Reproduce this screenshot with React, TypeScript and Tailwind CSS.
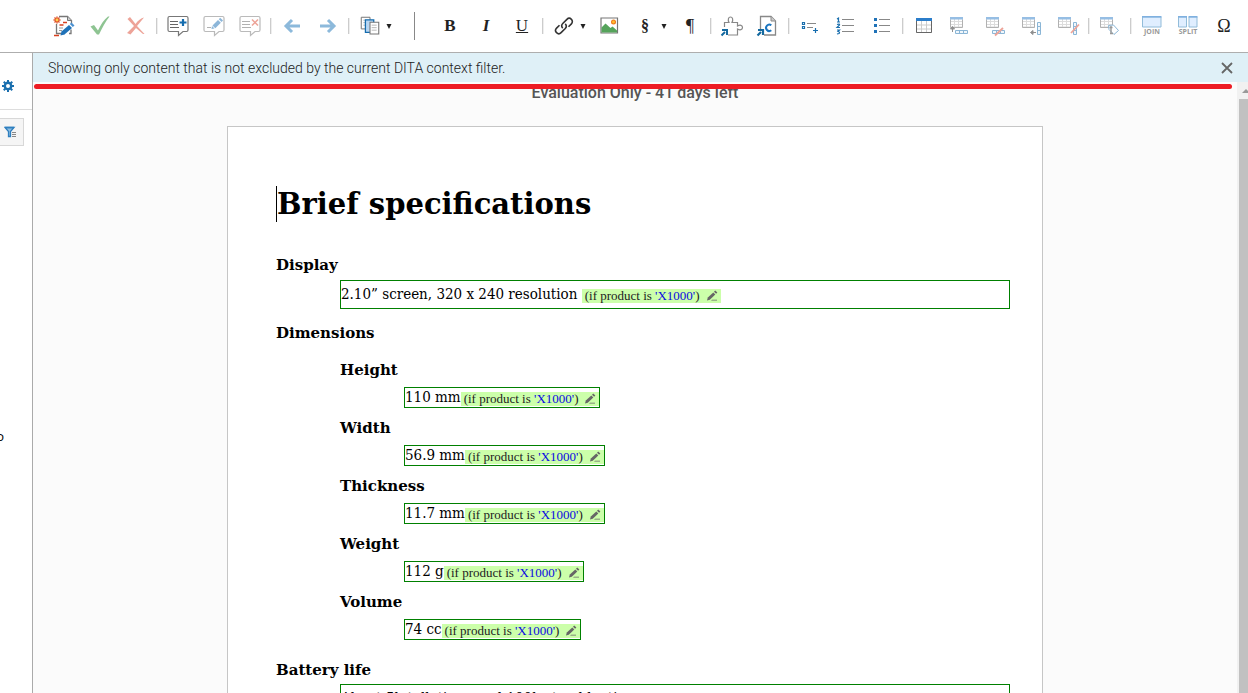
import type { ReactNode } from 'react';

function Svg({ children, faded = false, size = 'size-6' }: { children: ReactNode; faded?: boolean; size?: string }) {
  return (
    <svg viewBox="0 0 24 24" fill="none" aria-hidden="true" className={`${size} shrink-0 ${faded ? 'opacity-50' : ''}`}>
      {children}
    </svg>
  );
}

function Tool({ label, children }: { label: string; children: ReactNode }) {
  return (
    <button type="button" aria-label={label} className="flex h-9 w-9 shrink-0 items-center justify-center text-[#222]">
      {children}
    </button>
  );
}

function MenuTool({ label, children }: { label: string; children: ReactNode }) {
  return (
    <button type="button" aria-label={label} className="flex h-9 w-[45px] shrink-0 items-center gap-[6px] pl-2 text-[#222]">
      <span className="flex w-5 items-center justify-center">{children}</span>
      <svg viewBox="0 0 6 6" aria-hidden="true" className="mt-0.5 size-[6px]">
        <path d="M.5 0h5L3 5z" fill="#222" />
      </svg>
    </button>
  );
}

const Sep = () => <span className="mx-0.5 h-4 w-0.5 shrink-0 border-r border-[#eee] bg-[#ccc]" />;

const Bubble = () => <path d="M3.5 2.5h17a1.5 1.5 0 0 1 1.500 1.500v12a1.500 1.500 0 0 1-1.500 1.500h-3.500l-4.500 4v-4h-9a1.500 1.500 0 0 1-1.500-1.500v-12a1.500 1.500 0 0 1 1.500-1.500z" stroke="#777" strokeWidth="1.2" fill="#fff" />;

const Pen = () => (
  <>
    <path d="M9.500 15l.5-3 2.500 2.500z" fill="#1b6fb5" />
    <path d="M10.500 11.500l5.500-5.500 2.800 2.800-5.500 5.500z" fill="#1b6fb5" />
    <path d="M16.800 5.200l1.400-1.400 2.800 2.800L19.600 8z" fill="#1b6fb5" />
  </>
);

function MiniTable() {
  return (
    <>
      <path d="M2.500 4.500h12v8.500h-12zM2.500 7.500h12M2.500 10.500h12M6.500 5v8M10.500 5v8" stroke="#bbb" strokeWidth="1" fill="#fff" />
      <path d="M2.500 5.500v8h12v-8" stroke="#666" />
      <path d="M2 3h13v2.500H2z" fill="#2f7fca" />
    </>
  );
}

const RowBox = () => <path d="M7.500 16.500h12v3h-12zM11.500 16.500v3M15.500 16.500v3" stroke="#1a6fae" fill="#e3f0fa" />;
const ColBox = () => <path d="M17.500 8.500h3v12h-3zM17.500 12.500h3M17.500 16.500h3" stroke="#1a6fae" fill="#e3f0fa" />;

function JoinSplit({ split }: { split: boolean }) {
  return (
    <span className="flex flex-col items-center">
      <svg viewBox="0 0 20 12" className="h-3 w-5" aria-hidden="true" fill="#e0eeff">
        <path d={split ? 'M.5 1h8v10h-8zM11 1h8v10h-8z' : 'M.5 1h18.500v10H.5z'} stroke="#92bcd9" />
        <path d={split ? 'M0 .5h9M10.500 .5h9' : 'M0 .5h19.500'} stroke="#7fb0e0" strokeWidth="2" />
      </svg>
      <span className="font-['Open_Sans',sans-serif] text-[7px] leading-2 font-bold text-[#999]">{split ? 'SPLIT' : 'JOIN'}</span>
    </span>
  );
}

const letter = "font-['Liberation_Serif',serif]";

function Toolbar() {
  return (
    <header className="flex h-[53px] shrink-0 items-center overflow-hidden border-b border-[#aeaeae] bg-white pl-[46px]">
      <Tool label="Track changes">
        <Svg>
          <path d="M7 2.500h8.500l4 4v3M4.500 10v9.500h8M19 15.500v4h-2" stroke="#777" strokeWidth="1.300" />
          <path d="M15.500 2.500v4h4" stroke="#777" fill="#ccc" />
          <path d="M11 8.500h4M7.500 11h4M2 21.500h5" stroke="#d8401f" strokeWidth="1.300" />
          <path d="M7 14h4M7 16.500h3" stroke="#999" />
          <path d="M5 2.500v7M1.500 6h7M2.500 3.500l5 5M7.500 3.500l-5 5" stroke="#e0532a" strokeWidth="1.400" />
          <circle cx="5" cy="6" r="1.400" fill="#ffd050" />
          <path d="M8.500 21.500l1-4 7.500-6.500 3 3-7.500 6.500z" fill="#1f72b8" />
          <path d="M17.800 10l1.700-1.500 3 3-1.700 1.500z" fill="#4a90d0" />
        </Svg>
      </Tool>
      <Tool label="Accept change">
        <Svg faded>
          <path d="M2.500 12.500l3.500-1.500 4 5.500C12.500 11 16 5.500 20 2.500h1.500C17.500 7.500 14 14 11 20.500H9z" fill="#1f8a28" />
        </Svg>
      </Tool>
      <Tool label="Reject change">
        <Svg faded>
          <path d="M3.500 5L6 3l5.500 7C14 6.500 17 4 20 3.500L13 12l7.500 8h-1.500l-7-6-5.500 6.500L3 19l7-7z" fill="#dd4a33" />
        </Svg>
      </Tool>
      <Sep />
      <Tool label="Add comment">
        <Svg>
          <Bubble />
          <path d="M4 7.500h8M4 10.500h8M4 13.500h9" stroke="#666" />
          <path d="M17 5v7M13.500 8.500h7" stroke="#156cae" strokeWidth="2.200" />
        </Svg>
      </Tool>
      <Tool label="Edit comment">
        <Svg faded>
          <Bubble />
          <Pen />
          <path d="M5 13.500h4" stroke="#666" />
        </Svg>
      </Tool>
      <Tool label="Remove comment">
        <Svg faded>
          <Bubble />
          <path d="M4 7.500h8M4 10.500h8M4 13.500h9" stroke="#666" />
          <path d="M14 5.500l6 6M20 5.500l-6 6" stroke="#dd4a33" strokeWidth="1.500" />
        </Svg>
      </Tool>
      <Sep />
      <Tool label="Undo">
        <Svg faded>
          <path d="M20 12H7M12 6l-6 6 6 6" stroke="#1b75b8" strokeWidth="3" />
        </Svg>
      </Tool>
      <Tool label="Redo">
        <Svg faded>
          <path d="M4 12h13M12 6l6 6-6 6" stroke="#1b75b8" strokeWidth="3" />
        </Svg>
      </Tool>
      <Sep />
      <MenuTool label="Clipboard">
        <Svg size="size-5">
          <path d="M1.500 1.500h10.500v14h-10.500z" stroke="#777" strokeWidth="1.200" fill="#fff" />
          <path d="M4 5h3M4 8h3M4 11h3" stroke="#aaa" />
          <path d="M6.500 4.500h10v15h-10z" stroke="#156cae" strokeWidth="1.500" fill="#b8d6f2" />
          <path d="M12 7.500h10.500v14H12z" stroke="#777" strokeWidth="1.300" fill="#fff" />
          <path d="M14 11h6M14 14h6M14 17h6" stroke="#aaa" />
        </Svg>
      </MenuTool>
      <span className="mx-[17px] h-7 w-px shrink-0 bg-[#888]" />
      <Tool label="Bold"><b className={`${letter} text-[17px]`}>B</b></Tool>
      <Tool label="Italic"><i className={`${letter} text-[17px] font-bold`}>I</i></Tool>
      <Tool label="Underline"><u className={`${letter} text-[17px]`}>U</u></Tool>
      <Sep />
      <MenuTool label="Link">
        <Svg size="size-5">
          <path d="M10.500 14.500a4 4 0 0 1 0-5.500l5-5a3.800 3.800 0 0 1 5.400 5.400l-3.500 3.500" stroke="#333" strokeWidth="1.900" />
          <path d="M13.500 9.500a4 4 0 0 1 0 5.500l-5 5a3.800 3.800 0 0 1-5.400-5.400l3.500-3.500" stroke="#333" strokeWidth="1.900" />
        </Svg>
      </MenuTool>
      <Tool label="Image">
        <Svg>
          <path d="M4 4h16.500v15H4z" stroke="#777" strokeWidth="1.200" fill="#fff" />
          <path d="M4.500 18.500v-5l4-4 5 4.500 2-1.500 4.500 4v2z" fill="#55a35b" />
          <circle cx="16.500" cy="8" r="2.500" fill="#ef7618" />
          <circle cx="16.500" cy="8" r="1.400" fill="#ffc02e" />
        </Svg>
      </Tool>
      <MenuTool label="Section"><b className={`${letter} text-base`}>§</b></MenuTool>
      <Tool label="Paragraph"><span className={`${letter} text-lg`}>¶</span></Tool>
      <Sep />
      <Tool label="Insert reusable component">
        <Svg>
          <path d="M4.500 13V8.500h4.500c-1.500-3-.5-5.500 1.500-5.500s3 2.500 1.500 5.500H17.500V12c2.500-1.500 5-.8 5 1.500S20 16.500 17.500 15v6H8" stroke="#888" strokeWidth="1.200" />
          <path d="M1.500 21.500L5 18M2 16h5v5" stroke="#14699f" strokeWidth="2" />
        </Svg>
      </Tool>
      <Tool label="Insert content reference">
        <Svg>
          <path d="M4.500 15V2.500H15l4.500 4.500v14H8" stroke="#888" strokeWidth="1.300" />
          <path d="M15 2.500V7h4.500" stroke="#888" fill="#ccc" />
          <path d="M1.500 21.500L5 18M2 16h5v5" stroke="#14699f" strokeWidth="2.200" />
          <path d="M15.300 11.300a3.200 3.200 0 1 0 0 5" stroke="#1b75c0" strokeWidth="2" />
        </Svg>
      </Tool>
      <Sep />
      <Tool label="Insert list item">
        <Svg>
          <path d="M4.500 8.500h2v2h-2zM4.500 12.500h2v2h-2z" stroke="#1a6fae" strokeWidth="1.200" />
          <path d="M9 9.500h9M9 13.500h6" stroke="#888" />
          <path d="M17.500 14v5M15 16.500h5" stroke="#156cae" strokeWidth="1.200" />
        </Svg>
      </Tool>
      <Tool label="Insert ordered list">
        <Svg>
          <path d="M3 5l1.500-1v4M3 8h3M3 10.500q3-1 2.500.500L3 13.500h3M3 16h2.500L4 17.500q2.500.500 1 2L3 20" stroke="#1a6fae" strokeWidth="1.200" />
          <path d="M8 5.500h12M8 11.500h12M8 17.500h12" stroke="#888" />
        </Svg>
      </Tool>
      <Tool label="Insert unordered list">
        <Svg>
          <path d="M4 4h3v3H4zM4 10h3v3H4zM4 16h3v3H4z" fill="#1f72b8" />
          <path d="M9 5.500h11M9 11.500h11M9 17.500h11" stroke="#888" />
        </Svg>
      </Tool>
      <Sep />
      <Tool label="Insert table">
        <Svg>
          <path d="M4.500 4.500h15v14h-15zM4.500 11h15M4.500 15h15M9.500 6v12M14.500 6v12" stroke="#ccc" fill="#fff" />
          <path d="M4.500 6v12.500h15V6" stroke="#666" />
          <path d="M4 4h16v3H4z" fill="#2b7dca" />
        </Svg>
      </Tool>
      <Tool label="Insert row">
        <Svg faded>
          <MiniTable /><RowBox />
          <path d="M4.500 18v-5M2.500 15l2-2.500 2 2.500z" stroke="#222" fill="#222" />
        </Svg>
      </Tool>
      <Tool label="Delete row">
        <Svg faded>
          <MiniTable /><g transform="translate(1 0)"><RowBox /></g>
          <path d="M11 21.500l8-7.500" stroke="#dd4a33" strokeWidth="1.800" />
        </Svg>
      </Tool>
      <Tool label="Insert column">
        <Svg faded>
          <MiniTable /><ColBox />
          <path d="M16 18.500h-4M13 16.500l-2.500 2 2.500 2z" stroke="#222" fill="#222" />
        </Svg>
      </Tool>
      <Tool label="Delete column">
        <Svg faded>
          <MiniTable /><ColBox />
          <path d="M15 19l8-8.500" stroke="#dd4a33" strokeWidth="1.800" />
        </Svg>
      </Tool>
      <Sep />
      <Tool label="Table properties">
        <Svg faded>
          <MiniTable />
          <path d="M10.500 11.500l5-.5 5 5.500-4.500 4-5-5z" stroke="#1a6fae" fill="#fff" />
          <path d="M13 12v7M11.500 13.500h3M12 19.500h3" stroke="#333" strokeWidth="1.400" />
        </Svg>
      </Tool>
      <Sep />
      <Tool label="Join cells"><JoinSplit split={false} /></Tool>
      <Tool label="Split cell"><JoinSplit split /></Tool>
      <Tool label="Insert symbol"><span className={`${letter} text-lg`}>Ω</span></Tool>
    </header>
  );
}

const gearTeeth = [0, 45, 90, 135, 180, 225, 270, 315];

function Sidebar() {
  return (
    <aside className="flex w-[33px] shrink-0 flex-col items-start overflow-hidden border-r border-[#aaa] bg-white">
      <div className="h-[57px] w-full border-b border-[#ddd] pt-[27px] pl-0.5">
        <button type="button" aria-label="Settings" className="block">
          <svg viewBox="0 0 12 12" className="size-3" aria-hidden="true">
            {gearTeeth.map((a) => (
              <path key={a} d="M5 0h2v3H5z" fill="#1a6fae" transform={`rotate(${a} 6 6)`} />
            ))}
            <circle cx="6" cy="6" r="3.200" stroke="#1a6fae" strokeWidth="2.400" fill="#fff" />
          </svg>
        </button>
      </div>
      <button type="button" aria-label="Filter" className="mt-2 flex h-7 w-6 items-center border border-l-0 border-[#d8d8d8] bg-[#f5f5f5] pl-1">
        <svg viewBox="0 0 12 12" className="size-3" aria-hidden="true" fill="none">
          <path d="M1 1.500h9L6.500 5.500V10.500h-2v-5z" stroke="#2f7fbf" strokeWidth="1.300" fill="#8dbde0" />
          <path d="M1 1.500h9" stroke="#2f7fbf" strokeWidth="1.500" />
          <path d="M8 6.500h4M8 8.500h4M8 10.500h4" stroke="#888" />
        </svg>
      </button>
      <span className="mt-[280px] flex w-1 justify-end overflow-hidden font-['Open_Sans',sans-serif] text-[13px] leading-5">o</span>
    </aside>
  );
}

function Condition() {
  return (
    <span className="inline-flex h-[14px] items-center bg-[#ccffaa] pr-[3px] pl-[3px] align-[-1px] font-['Liberation_Serif',serif] text-[13px] leading-[14px] text-[#222]">
      <span>(if product is <span className="text-[#0a0ae0]">'X1000'</span>)</span>
      <button type="button" aria-label="Edit condition" className="ml-[6px] block">
        <svg viewBox="0 0 12 12" className="size-3" aria-hidden="true">
          <path d="M1 10.500l.8-3 5.500-5 2 2-5.500 5.200z" fill="#666" />
          <path d="M8 1.800l1.200-1.200 2.200 2-1.300 1.200zM6 9.700h5v.8H5z" fill="#666" />
        </svg>
      </button>
    </span>
  );
}

const term = "font-['DejaVu_Serif',serif] text-[15px] leading-6 font-bold";
const value = "font-['DejaVu_Serif_Condensed','DejaVu_Serif',serif] text-[15px] border border-[#008000] whitespace-nowrap";

const dimensions = [
  ['Height', '110 mm'],
  ['Width', '56.9 mm'],
  ['Thickness', '11.7 mm'],
  ['Weight', '112 g'],
  ['Volume', '74 cc'],
];

function Topic() {
  return (
    <article className="mx-auto mt-6 w-full max-w-[816px] border border-[#c6c6c6] bg-white pt-[59px] pr-8 pb-12 pl-12 text-black">
      <h1 className="border-l border-black font-['DejaVu_Serif',serif] text-[29px] leading-9 font-bold">Brief specifications</h1>
      <dl className="mt-[31px]">
        <dt className={term}>Display</dt>
        <dd className={`${value} mt-[3px] ml-16 h-[29px] leading-[27px]`}>
          2.10” screen, 320 x 240 resolution <Condition />
        </dd>
        <dt className={`${term} mt-3`}>Dimensions</dt>
        <dd className="mt-[13px] ml-16">
          <dl className="flex flex-col gap-2">
            {dimensions.map(([name, size]) => (
              <div key={name}>
                <dt className={term}>{name}</dt>
                <dd className={`${value} mt-[5px] ml-16 h-[21px] w-fit leading-[19px]`}>
                  {size}<Condition />
                </dd>
              </div>
            ))}
          </dl>
        </dd>
        <dt className={`${term} mt-[18px]`}>Battery life</dt>
        <dd className={`${value} mt-0.5 ml-16 h-[29px] leading-[27px]`}>
          About 5h talk time, and 100h stand by time <Condition />
        </dd>
      </dl>
    </article>
  );
}

export default function App() {
  return (
    <div className="flex h-screen flex-col overflow-hidden bg-white">
      <Toolbar />
      <div className="flex min-h-0 flex-1">
        <Sidebar />
        <div className="relative flex min-w-0 flex-1 flex-col bg-[#fbfbfb]">
          <div role="status" className="flex h-[29px] shrink-0 items-center justify-between bg-[#dff0f7] pr-[14px] pl-[15px] font-['Roboto',sans-serif] text-sm font-light text-[#222]">
            <p>Showing only content that is not excluded by the current DITA context filter.</p>
            <button type="button" aria-label="Close">
              <svg viewBox="0 0 14 14" className="size-[14px]" aria-hidden="true">
                <path d="M2 2l10 10M12 2L2 12" stroke="#666" strokeWidth="1.800" />
              </svg>
            </button>
          </div>
          <div className="absolute top-[31px] right-4 left-px h-[5px] rounded-sm bg-[#ed1c24]" />
          <div className="flex min-h-0 flex-1">
            <main className="min-w-0 flex-1 overflow-hidden">
              <p className="mt-0.5 text-center font-['Roboto',sans-serif] text-base leading-[18px] font-medium text-[#555]">Evaluation Only - 41 days left</p>
              <Topic />
            </main>
            <div className="flex w-[11px] shrink-0 flex-col items-end overflow-hidden bg-[#f1f1f1]">
              <svg viewBox="0 0 6 4" className="mt-[7px] h-1 w-[6px]" aria-hidden="true">
                <path d="M0 4l4-4 2 2v2z" fill="#999" />
              </svg>
              <div className="mt-[6px] w-[9px] flex-1 bg-[#c1c1c1]" />
            </div>
          </div>
        </div>
      </div>
    </div>
  );
}
